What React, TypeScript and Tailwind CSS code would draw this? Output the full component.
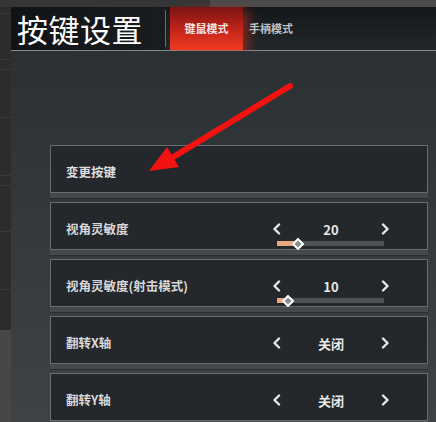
import React from "react";

interface Setting {
    label: string
    value: string
    slider?: number
}

const settings: Setting[] = [
    { label: "视角灵敏度", value: "20", slider: 20 },
    { label: "视角灵敏度(射击模式)", value: "10", slider: 10 },
    { label: "翻转X轴", value: "关闭" },
    { label: "翻转Y轴", value: "关闭" },
]

const font = { fontFamily: '"Noto Sans CJK SC", "Noto Sans", sans-serif' }

function Chevron({ dir }: { dir: "left" | "right" }) {
    return (
        <svg width="9" height="12" viewBox="0 0 9 12">
            <polyline
                points={dir === "left" ? "7,1.5 2.5,6 7,10.5" : "2,1.5 6.5,6 2,10.5"}
                fill="none"
                stroke="#e6e6e6"
                strokeWidth="2.4"
                strokeLinecap="round"
                strokeLinejoin="round"
            />
        </svg>
    )
}

function Row({ children }: { children: React.ReactNode }) {
    return (
        <div className="flex flex-col">
            <div className="h-[48px] bg-[#24272b] border border-[#686d72] flex items-start pt-[16px] pl-[15px]">
                {children}
            </div>
            <div className="h-[6px] bg-[#44494c] border-b border-[#2a2e31]" />
        </div>
    )
}

export default function App() {
    return (
        <div className="w-[436px] h-[422px] overflow-hidden relative bg-[#2e2e2e] flex flex-col" style={font}>
            {/* top strip */}
            <div className="h-[7px] flex shrink-0">
                <div className="w-[210px] bg-[#363636]" />
                <div className="flex-1 bg-[#4b4b4b]" />
            </div>

            <div className="flex flex-1">
                {/* left strip */}
                <div className="w-[11px] flex flex-col">
                    <div className="h-[323px] bg-[#2c2c2c] flex flex-col">
                        <div className="h-[7px] border-b border-[#3a3a3a]" />
                        <div className="h-[46px] border-b border-[#3a3a3a]" />
                        <div className="h-[10px] border-b border-[#3a3a3a]" />
                        <div className="h-[48px] border-b border-[#3a3a3a]" />
                        <div className="h-[58px] border-b border-[#3a3a3a]" />
                        <div className="h-[10px] border-b border-[#3a3a3a]" />
                        <div className="h-[46px] border-b border-[#3a3a3a]" />
                        <div className="h-[58px] border-b border-[#3a3a3a]" />
                    </div>
                    <div className="flex-1 bg-[#474747]" />
                </div>

                <div className="flex-1 flex flex-col">
                    {/* header */}
                    <div className="h-[44px] shrink-0 flex items-stretch bg-gradient-to-b from-[#15181b] to-[#22272a] border-b border-[#858a8f]">
                        <div className="w-[154px] flex items-center pl-[6px] bg-gradient-to-r from-[#101316] to-[#191d20]">
                            <span className="text-[31px] leading-none text-white tracking-[0.5px]">按键设置</span>
                        </div>
                        <div className="w-px my-[3px] bg-[#6a6f74]" />
                        <div className="w-[4px]" />
                        <div className="w-[73px] flex items-center justify-center bg-gradient-to-b from-[#7a1410] via-[#c0241a] to-[#ee3a22] shadow-[6px_4px_10px_rgba(230,50,30,0.45)]">
                            <span className="text-[11px] font-bold text-[#f4e6e4]">键鼠模式</span>
                        </div>
                        <div className="w-[56px] flex items-center justify-center">
                            <span className="text-[11px] font-bold text-[#bfc2c4]">手柄模式</span>
                        </div>
                    </div>

                    {/* main panel */}
                    <div className="flex-1 bg-gradient-to-b from-[#2b3033] to-[#3d4346] pt-[94px] pl-[39px] pr-[8px] flex flex-col gap-[3px]">
                        <Row>
                            <span className="text-[12.5px] leading-[20px] font-bold text-[#dedede]">变更按键</span>
                        </Row>
                        {settings.map((s) => (
                            <Row key={s.label}>
                                <span className="text-[12.5px] leading-[20px] font-bold text-[#d8d8d8]">{s.label}</span>
                                <div className="ml-auto mr-[35px] w-[122px] flex flex-col">
                                    <div className="h-[20px] flex items-center justify-between px-[2px]">
                                        <Chevron dir="left" />
                                        <span className="text-[13px] font-bold text-[#e8e8e8] leading-none">{s.value}</span>
                                        <Chevron dir="right" />
                                    </div>
                                    {s.slider !== undefined && (
                                        <div className="relative h-[5px] mt-[2px] ml-[7px] mr-[8px] bg-[#4f5255]">
                                            <div className="h-full bg-[#e9a97c]" style={{ width: `${s.slider}%` }} />
                                            <div
                                                className="absolute top-1/2 w-[9px] h-[9px] rotate-45 bg-[#8c8c8c] border-2 border-white -translate-x-1/2 -translate-y-1/2"
                                                style={{ left: `${s.slider}%` }}
                                            />
                                        </div>
                                    )}
                                </div>
                            </Row>
                        ))}
                    </div>
                </div>
            </div>

            {/* red annotation arrow */}
            <svg className="absolute left-0 top-0 pointer-events-none" width="436" height="422">
                <line x1="290" y1="86" x2="170" y2="159" stroke="#f21212" strokeWidth="6" strokeLinecap="round" />
                <polygon points="149,171 167,147 179,167" fill="#f21212" />
            </svg>
        </div>
    )
}
